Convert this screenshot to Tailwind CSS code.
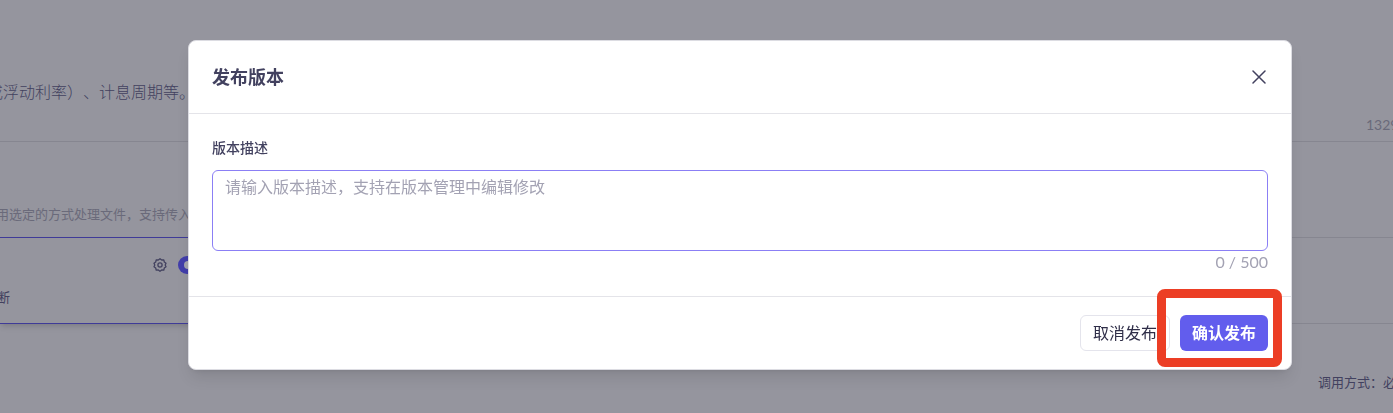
<!DOCTYPE html>
<html lang="zh-CN">
<head>
  <meta charset="UTF-8" />
  <meta name="viewport" content="width=device-width, initial-scale=1" />
  <title>发布版本</title>
  <script src="https://cdn.jsdelivr.net/npm/@tailwindcss/browser@4"></script>
</head>
<body class="min-h-screen overflow-hidden bg-[#95959e] font-[Lato,'Noto_Sans_CJK_SC',sans-serif] text-[#42415f]">
  <!-- Page behind the dialog -->
  <main class="grid h-screen grid-cols-2 overflow-hidden">
    <section>
      <div class="flex h-[142px] items-start border-b border-[#868690] pt-20">
        <p class="flex w-[195px] justify-end text-base font-light leading-6 whitespace-nowrap [text-spacing-trim:space-all]">或浮动利率）、计息周期等。</p>
      </div>
      <div class="flex h-[95px] items-end pb-[11px]">
        <p class="flex w-[191px] justify-end text-[13px] leading-6 whitespace-nowrap text-[#6a6a7a]">用选定的方式处理文件，支持传入</p>
      </div>
      <div class="h-[87px] border-y border-[#3f3b98] pt-[15px] shadow-md">
        <div class="flex h-6 w-[210px] items-center justify-end gap-[11px]">
          <button type="button" aria-label="设置">
            <svg class="size-3.5" viewBox="0 0 14 14" fill="none" stroke="currentColor" stroke-width="1.3" stroke-linejoin="round">
              <path d="M7 .7L8.7 2L10.8 1.9L11.3 4L13 5.3L12.2 7L13 8.7L11.3 10L10.8 12.1L8.7 12L7 13.3L5.3 12L3.2 12.1L2.7 10L1 8.7L1.8 7L1 5.3L2.7 4L3.2 1.9L5.3 2Z" />
              <circle cx="7" cy="7" r="2.1" />
            </svg>
          </button>
          <span class="flex h-[18px] w-8 items-center rounded-full bg-[#423eab] px-1.5"><span class="size-2 rounded-full bg-[#a5a5ae]"></span></span>
        </div>
        <p class="mt-2 flex w-2.5 justify-end text-[13px] leading-6 whitespace-nowrap">断</p>
      </div>
    </section>
    <section>
      <div class="flex h-[142px] items-end justify-end border-b border-[#868690] pb-1">
        <p class="w-[27px] text-sm leading-6 whitespace-nowrap text-[#6a6a7a]">13290</p>
      </div>
      <div class="h-24 border-b border-[#868690]"></div>
      <div class="h-[86px] border-b border-[#868690]"></div>
      <div class="flex justify-end pt-[46px]">
        <p class="w-[75px] text-[13px] leading-6 whitespace-nowrap">调用方式：必须</p>
      </div>
    </section>
  </main>

  <!-- Publish dialog -->
  <div class="fixed inset-0 flex items-start justify-center pt-10 pl-[87px]">
    <form role="dialog" aria-labelledby="title" class="w-full max-w-[1104px] rounded-lg border border-[#dcdce2] bg-white shadow-lg">
      <header class="flex h-[73px] items-center justify-between border-b border-[#e4e4e9] px-[23px]">
        <h1 id="title" class="text-lg font-bold">发布版本</h1>
        <button type="button" aria-label="关闭" class="p-0.5">
          <svg class="size-3.5" viewBox="0 0 14 14" fill="none" stroke="currentColor" stroke-width="1.5" stroke-linecap="round">
            <path d="M1 1l12 12M13 1L1 13" />
          </svg>
        </button>
      </header>
      <div class="flex h-[182px] flex-col px-[23px] pt-[22px]">
        <label for="desc" class="mb-2.5 text-sm leading-6 font-medium">版本描述</label>
        <textarea id="desc" maxlength="500" placeholder="请输入版本描述，支持在版本管理中编辑修改" class="block h-[81px] w-full resize-none rounded-md border border-[#8b7ff5] px-3 py-1 text-base leading-6 placeholder-[#a3a2b3] outline-none"></textarea>
        <p class="text-right text-base leading-[22px] text-[#a3a2b3]">0 / 500</p>
      </div>
      <footer class="flex h-[73px] items-center justify-end gap-2.5 border-t border-[#e4e4e9] px-[23px]">
        <button type="button" class="h-9 rounded-md border border-[#e4e4ec] px-3 text-base leading-[22px] text-[#2f2e48]">取消发布</button>
        <div class="relative">
          <button type="submit" class="h-9 rounded-md bg-[#625ded] px-3 text-base leading-[22px] font-bold text-white">确认发布</button>
          <span class="pointer-events-none absolute -top-[26px] -right-[14px] -bottom-4 -left-[23px] rounded-lg border-[9px] border-[#ec3e25]"></span>
        </div>
      </footer>
    </form>
  </div>
</body>
</html>
